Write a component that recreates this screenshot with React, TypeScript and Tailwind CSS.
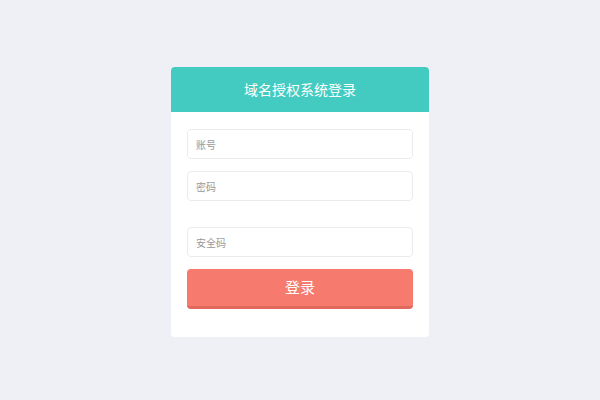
export default function App() {
  return (
    <div
      className="w-[600px] h-[400px] bg-[#eff0f5] pt-[67px]"
      style={{ fontFamily: '"Noto Sans CJK SC", "Liberation Sans", sans-serif' }}
    >
      <div className="mx-auto w-[258px] h-[270px] bg-white rounded-[4px] overflow-hidden">
        <div className="h-[45px] bg-[#43cbc1] flex items-center justify-center text-white text-[14px]">
          域名授权系统登录
        </div>
        <div className="px-4 pt-[17px]">
          <input
            placeholder="账号"
            className="block w-full h-[30px] border border-[#ebebeb] rounded-[4px] px-2 text-[10px] outline-none placeholder:text-[#999]"
          />
          <input
            type="password"
            placeholder="密码"
            className="block w-full h-[30px] mt-[12px] border border-[#ebebeb] rounded-[4px] px-2 text-[10px] outline-none placeholder:text-[#999]"
          />
          <input
            placeholder="安全码"
            className="block w-full h-[30px] mt-[26px] border border-[#ebebeb] rounded-[4px] px-2 text-[10px] outline-none placeholder:text-[#999]"
          />
          <button className="block w-full h-[40px] mt-[12px] bg-[#f67b6e] border-b-[3px] border-[#e1685c] rounded-[4px] text-white text-[15px]">
            登录
          </button>
        </div>
      </div>
    </div>
  );
}
